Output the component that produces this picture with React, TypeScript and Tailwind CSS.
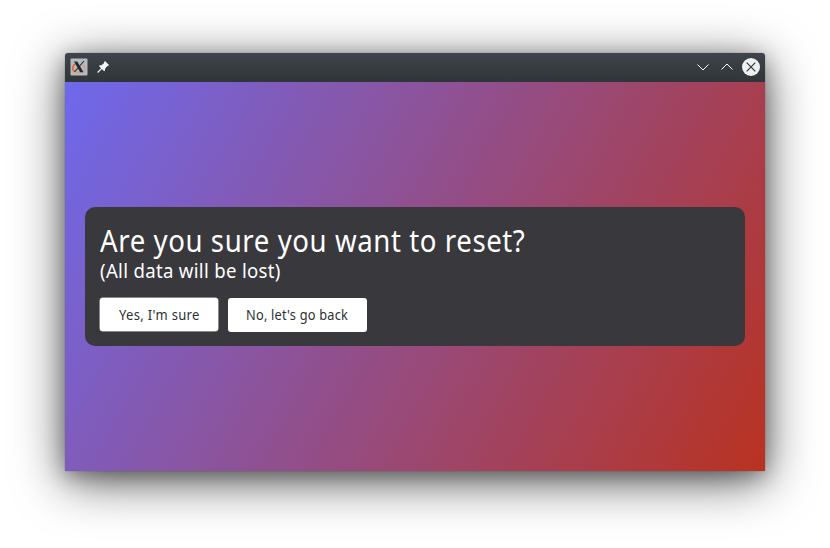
function AppIcon() {
  return (
    <svg width="18" height="18" viewBox="0 0 18 18">
      <rect x="0.5" y="0.5" width="17" height="17" rx="1" fill="#b4bbc0" />
      <path d="M6 5.500C2 7.500 1.500 11.500 5 13.700" fill="none" stroke="#e8622e" strokeWidth="1.500" />
      <path d="M5 13.700c4.500 1.800 10 .3 10.200-3.200 0-1.700-1-3-2.500-3.700" fill="none" stroke="#dd9b80" strokeWidth="1.300" />
      <path d="M4 3.500h3.300l6.200 10.700h-3.300z" fill="#242a2e" />
      <path d="M14 3 4.500 14" stroke="#242a2e" strokeWidth="1.100" />
    </svg>
  );
}

function PinIcon() {
  return (
    <svg width="12" height="12" viewBox="0 0 12 12" fill="#f4f5f5">
      <path d="M8 0 12 4 10.900 5.200 10.200 5 8 8 8 9.600 7.100 10.300 4.900 8.100 1.100 12 .200 11.100 4 7.200 2 5.100 2.800 4.300 4.400 4.200 7.200 2 6.900 1.200z" />
    </svg>
  );
}

export default function App() {
  return (
    <div className="h-[548px] w-[830px] overflow-hidden bg-white pt-[53px] pl-[65px] font-['Noto_Sans',sans-serif]">
      <div className="flex h-[418px] w-[700px] flex-col rounded-t-[3px] shadow-[0_10px_50px_rgba(0,0,0,0.65),0_5px_20px_rgba(0,0,0,0.3),0_0_1px_rgba(0,0,0,0.6)]">
        <header className="flex h-[29px] shrink-0 items-center justify-between rounded-t-[3px] bg-linear-to-b from-[#3f444b] to-[#2f3538] pr-[5px] pb-px pl-[5px]">
          <div className="flex items-center gap-[9px]">
            <AppIcon />
            <PinIcon />
          </div>
          <div className="flex items-center gap-[10px] text-[#fcfcfc]">
            <svg width="14" height="14" viewBox="0 0 14 14" fill="none" stroke="currentColor">
              <path d="M1.500 4.500 7 10l5.500-5.500" />
            </svg>
            <svg width="14" height="14" viewBox="0 0 14 14" fill="none" stroke="currentColor">
              <path d="M1.500 9.500 7 4l5.500 5.500" />
            </svg>
            <svg className="-ml-[2px]" width="18" height="18" viewBox="0 0 18 18">
              <circle cx="9" cy="9" r="9" fill="#eff0f1" />
              <path d="m4.700 4.700 8.600 8.600m0-8.600-8.600 8.600" stroke="#31363b" strokeWidth="1.200" />
            </svg>
          </div>
        </header>
        <main className="flex flex-1 items-center bg-[linear-gradient(119.06deg,#6e69ec,#b93220)] px-5">
          <section className="flex h-[139px] w-full flex-col items-start rounded-[10px] bg-[#39383d] pt-[15px] pl-[15px] text-white">
            <h1 className="origin-left scale-x-[0.92] text-[30px] leading-[37px] tracking-[0.63px] whitespace-nowrap">Are you sure you want to reset?</h1>
            <p className="origin-left scale-x-[0.93] text-[20px] leading-[24px] tracking-[0.33px] whitespace-nowrap">(All data will be lost)</p>
            <div className="mt-[15px] flex gap-[10px] text-[14px] text-[#2c3034]">
              <button className="h-[33px] w-[118px] rounded-[3px] bg-white shadow-[0_0_0_0.5px_#d9dade]">
                <span className="inline-block scale-x-[0.93] tracking-[0.35px]">Yes, I'm sure</span>
              </button>
              <button className="h-[34px] w-[139px] rounded-[3px] bg-white pb-px">
                <span className="inline-block scale-x-[0.91] tracking-[0.25px]">No, let's go back</span>
              </button>
            </div>
          </section>
        </main>
      </div>
    </div>
  );
}
